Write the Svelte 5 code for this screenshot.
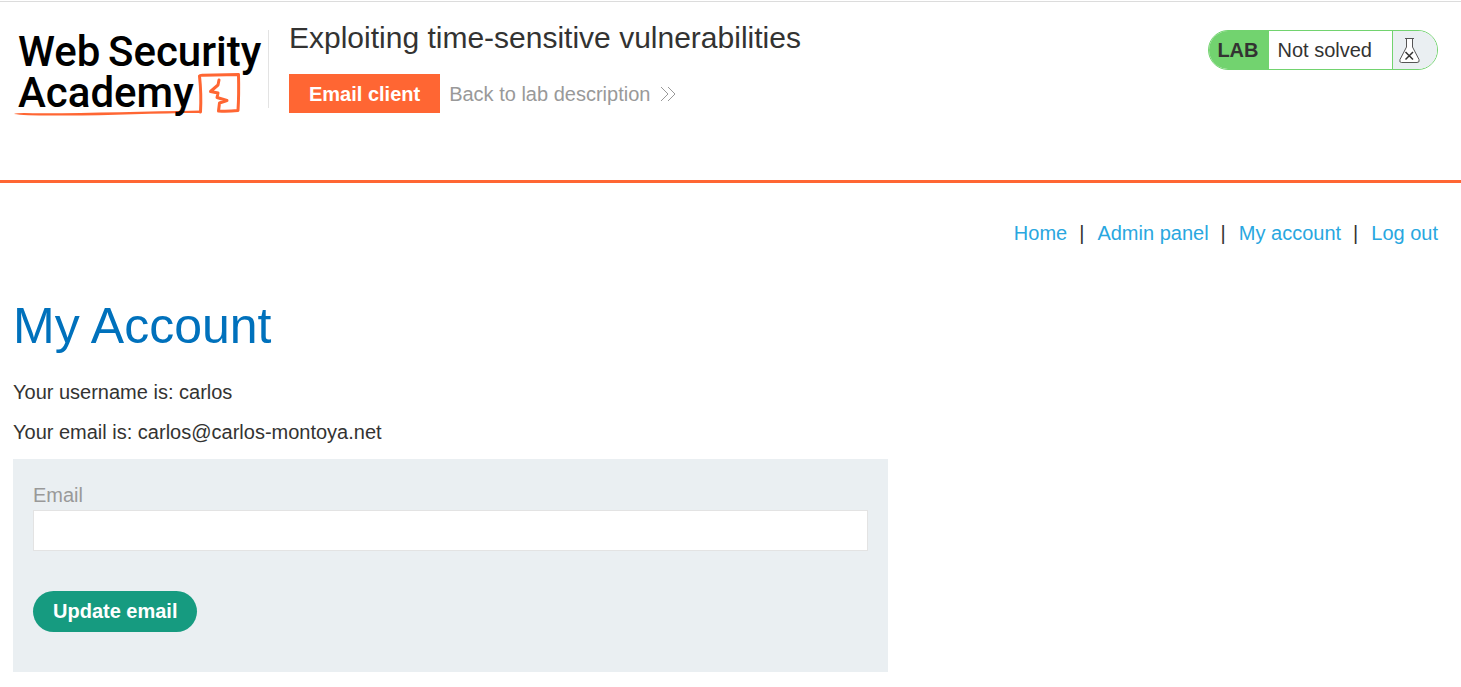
<script>
  const links = ['Home', 'Admin panel', 'My account', 'Log out'];
  let email = $state('');
</script>

<header>
  <a class="logo" href="#academy" aria-label="Web Security Academy">
    <svg width="256" height="94" viewBox="0 0 256 94">
      <path class="underline" d="M1 89 Q4 87.500 20 88.200 C70 88.500 130 86.500 187 85.500 L187 88 C140 88 90 91 40 90.500 Q10 90.500 1 89Z" />
      <path class="line" d="M187.500 87 Q188.500 70 186.500 51 Q187 50 190 50.200 L225.500 49.500 Q226 70 225 85.500 Q215 86.500 205.500 86 L206.500 78 L214 75.500 L204 72.500 L205 68 L197.500 66.500 L205 60 L206 55" />
      <g class="word">
        <text x="5" y="41">Web</text>
        <text x="95" y="41">Security</text>
        <text x="5" y="82">Academy</text>
      </g>
    </svg>
  </a>
  <div class="title">
    <h2>Exploiting time-sensitive vulnerabilities</h2>
    <div class="actions">
      <a class="client" href="#email">Email client</a>
      <a class="back" href="#lab">Back to lab description
        <svg width="16" height="16" viewBox="0 0 16 16"><path d="M1 1L8 8L1 15M8 1L15 8L8 15" /></svg>
      </a>
    </div>
  </div>
  <div class="status">
    <strong>LAB</strong>
    <span>Not solved</span>
    <div class="flask">
      <svg width="21" height="26" viewBox="0 0 21 26">
        <path class="glass" d="M6 1.500H15M7.500 1.500V10L1 22.500Q0 25.500 2.500 25.500H18Q21 25.500 20 22.500L13.500 10V1.500" />
        <path class="cross" d="M6.500 15L14 22.500M14 15L6.500 22.500" />
      </svg>
    </div>
  </div>
</header>

<main>
  <nav>
    {#each links as link, i}
      {#if i > 0}<span>|</span>{/if}
      <a href="#{link}">{link}</a>
    {/each}
  </nav>
  <h1>My Account</h1>
  <p>Your username is: carlos</p>
  <p>Your email is: carlos@carlos-montoya.net</p>
  <form onsubmit={(e) => e.preventDefault()}>
    <label for="email">Email</label>
    <input id="email" type="email" bind:value={email} />
    <button type="submit">Update email</button>
  </form>
</main>

<style>
  :global(body) {
    background: #fff;
    color: #333332;
    font: 20px/24px "Liberation Sans", Arial, sans-serif;
  }
  a { text-decoration: none; }
  header {
    display: flex;
    align-items: flex-start;
    box-sizing: border-box;
    min-height: 182px;
    margin-top: 1px;
    padding: 23px 23px 0 13px;
    border-top: 1px solid #dcdcdc;
    border-bottom: 3px solid #ff6633;
  }
  .logo {
    flex: none;
    height: 94px;
    margin-right: -1px;
  }
  .logo svg { display: block; }
  .word {
    font: 500 42px Roboto, sans-serif;
    fill: #000;
  }
  .underline { fill: #ff6633; }
  .line {
    fill: none;
    stroke: #ff6633;
    stroke-width: 3;
    stroke-linejoin: round;
    stroke-linecap: round;
  }
  .title {
    position: relative;
    flex: 1;
    padding-left: 21px;
  }
  .title::before {
    content: "";
    position: absolute;
    left: 0;
    top: 5px;
    height: 78px;
    border-left: 1px solid #e3e3e3;
  }
  h2 {
    margin: -4px 0 19px;
    font-size: 30px;
    line-height: 34px;
    font-weight: 400;
  }
  .actions {
    display: flex;
    align-items: center;
    gap: 9px;
  }
  .client {
    padding: 8px 20px 7px;
    background: #ff6633;
    color: #fff;
    font-weight: 700;
  }
  .back {
    display: flex;
    align-items: center;
    gap: 10px;
    color: #999;
  }
  .back svg {
    fill: none;
    stroke: #999;
    stroke-width: 1;
  }
  .status {
    display: flex;
    box-sizing: border-box;
    height: 40px;
    margin-top: 5px;
    overflow: hidden;
    border: 1px solid #72d36f;
    border-radius: 20px;
    line-height: 38px;
  }
  .status strong {
    padding: 0 10px 0 8px;
    background: #72d36f;
  }
  .status span { padding: 0 20px 0 9px; }
  .flask {
    display: flex;
    align-items: center;
    width: 38px;
    padding-left: 6px;
    border-left: 1px solid #72d36f;
    background: #eaeff2;
  }
  .glass {
    fill: #fff;
    stroke: #555;
  }
  .cross {
    stroke: #333332;
    stroke-width: 1.5;
  }
  main { padding: 38px 23px 15px 13px; }
  nav {
    display: flex;
    justify-content: flex-end;
    gap: 12px;
  }
  nav a { color: #29a7df; }
  nav span { margin-right: 1px; }
  h1 {
    margin: 51px 0 23px;
    color: #0071bc;
    font-size: 50px;
    line-height: 60px;
    font-weight: 400;
  }
  p {
    margin: 0 0 15px;
    padding-top: 1px;
  }
  form {
    display: flex;
    flex-direction: column;
    align-items: flex-start;
    box-sizing: border-box;
    max-width: 875px;
    padding: 24px 20px 40px;
    background: #eaeff2;
  }
  label {
    margin-bottom: 3px;
    color: #999;
  }
  input {
    box-sizing: border-box;
    width: 100%;
    height: 41px;
    padding: 0 10px;
    border: 1px solid #e3e3e3;
    background: #fff;
    font: inherit;
  }
  button {
    margin-top: 40px;
    padding: 8px 20px 9px;
    border: 0;
    border-radius: 21px;
    background: #169b80;
    color: #fff;
    font: inherit;
    font-weight: 700;
  }
</style>
